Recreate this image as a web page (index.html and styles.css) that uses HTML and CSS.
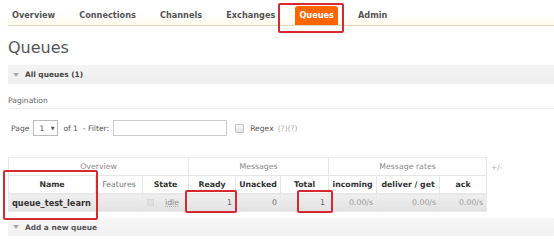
FILE: index.html
```html
<!DOCTYPE html>
<html lang="en">

<head>
    <meta charset="UTF-8">
    <title>Queues</title>
    <link rel="stylesheet" href="styles.css">
</head>

<body>
    <div class="page">
        <ul class="nav">
            <li><a href="#">Overview</a></li>
            <li><a href="#">Connections</a></li>
            <li><a href="#">Channels</a></li>
            <li><a href="#">Exchanges</a></li>
            <li><a href="#" class="active">Queues</a></li>
            <li><a href="#">Admin</a></li>
        </ul>

        <h1>Queues</h1>

        <div class="section-bar">
            <svg class="toggle" width="6" height="4" viewBox="0 0 6 4"><polygon points="0,0 6,0 3,4" fill="#aaa"/></svg>
            <span>All queues (1)</span>
        </div>

        <div class="pagination-title">Pagination</div>

        <div class="filter-row">
            <span>Page</span>
            <span class="page-select">1 <span class="arrow">&#9660;</span></span>
            <span>of 1 &nbsp;- Filter:</span>
            <span class="filter-input"></span>
            <span class="checkbox"></span>
            <span>Regex</span>
            <span class="help">(?)(?)</span>
        </div>

        <div class="table-wrap">
            <table class="queues">
                <colgroup>
                    <col style="width: 87px">
                    <col style="width: 47px">
                    <col style="width: 46px">
                    <col style="width: 47px">
                    <col style="width: 45px">
                    <col style="width: 48px">
                    <col style="width: 48px">
                    <col style="width: 63px">
                    <col style="width: 47px">
                </colgroup>
                <thead>
                    <tr class="group">
                        <th colspan="3">Overview</th>
                        <th colspan="3">Messages</th>
                        <th colspan="3">Message rates</th>
                    </tr>
                    <tr class="cols">
                        <th>Name</th>
                        <th class="light">Features</th>
                        <th>State</th>
                        <th>Ready</th>
                        <th>Unacked</th>
                        <th>Total</th>
                        <th>incoming</th>
                        <th>deliver / get</th>
                        <th>ack</th>
                    </tr>
                </thead>
                <tbody>
                    <tr>
                        <td class="name">queue_test_learn</td>
                        <td></td>
                        <td class="state"><span class="dot"></span><abbr>idle</abbr></td>
                        <td class="num">1</td>
                        <td class="num">0</td>
                        <td class="num">1</td>
                        <td class="num rate">0.00/s</td>
                        <td class="num rate">0.00/s</td>
                        <td class="num rate">0.00/s</td>
                    </tr>
                </tbody>
            </table>
            <span class="plus-minus">+/-</span>
        </div>

        <div class="section-bar add">
            <svg class="toggle" width="6" height="4" viewBox="0 0 6 4"><polygon points="0,0 6,0 3,4" fill="#aaa"/></svg>
            <span>Add a new queue</span>
        </div>

        <!-- 注釈の赤枠 -->
        <div class="mark mark-nav"></div>
        <div class="mark mark-name"></div>
        <div class="mark mark-ready"></div>
        <div class="mark mark-total"></div>
    </div>
</body>

</html>
```

FILE: styles.css
```css
body {
    margin: 0;
    padding: 0;
    background-color: white;
    font-family: "DejaVu Sans", Verdana, sans-serif;
    color: #484848;
}

.page {
    position: relative;
    padding-left: 8px;
    overflow: hidden;
    height: 244px;
}

.nav {
    display: flex;
    gap: 16px;
    list-style: none;
    margin: 0;
    padding: 0;
    height: 25px;
    align-items: flex-end;
    border-bottom: 1px solid #e4d8b8;
    background: linear-gradient(white 60%, #fffaea);
}

.nav a {
    display: block;
    padding: 0 4px;
    height: 19px;
    line-height: 19px;
    font-size: 8.2px;
    font-weight: bold;
    color: #555;
    text-decoration: none;
    border-radius: 3px 3px 0 0;
}

.nav a.active {
    background-color: #f60;
    color: white;
}

h1 {
    margin: 12px 0 0 0;
    height: 20px;
    line-height: 20px;
    font-size: 16px;
    font-weight: normal;
    color: #555;
}

.section-bar {
    display: flex;
    align-items: center;
    margin-top: 7px;
    height: 19px;
    padding-left: 5px;
    background: linear-gradient(#f4f4f4, #efefef);
    font-size: 7.4px;
    font-weight: bold;
    color: #444;
}

.section-bar .toggle {
    margin-right: 6px;
}

.pagination-title {
    margin-top: 10px;
    height: 14px;
    line-height: 14px;
    font-size: 7.6px;
    color: #666;
    border-bottom: 1px solid #eee;
}

.filter-row {
    display: flex;
    align-items: center;
    margin-top: 11px;
    height: 16px;
    padding-left: 3px;
    font-size: 7.6px;
    color: #555;
}

.page-select {
    display: inline-block;
    box-sizing: border-box;
    width: 25px;
    height: 16px;
    line-height: 14px;
    margin: 0 5px 0 4px;
    padding-left: 5px;
    border: 1px solid #bbb;
    background: white;
}

.page-select .arrow {
    font-size: 5px;
    margin-left: 4px;
    vertical-align: 1px;
}

.filter-input {
    display: inline-block;
    box-sizing: border-box;
    width: 114px;
    height: 16px;
    margin-left: 4px;
    border: 1px solid #ccc;
    background: white;
}

.checkbox {
    display: inline-block;
    box-sizing: border-box;
    width: 9px;
    height: 9px;
    margin: 0 6px 0 8px;
    border: 1px solid #c4c4c4;
    border-radius: 1px;
    background: linear-gradient(#f8f8f8, #e4e4e4);
}

.help {
    margin-left: 4px;
    color: #aaa;
}

.table-wrap {
    display: flex;
    align-items: flex-start;
    margin-top: 21px;
}

.queues {
    border-collapse: collapse;
    table-layout: fixed;
    width: 478px;
    font-size: 7.8px;
}

.queues th,
.queues td {
    height: 18px;
    padding: 0 3px;
    border: 1px solid #e6e6e6;
    box-sizing: border-box;
    white-space: nowrap;
    overflow: hidden;
}

.queues .group th {
    font-weight: normal;
    color: #888;
    border-top-color: #eee;
}

.queues .cols th {
    font-weight: bold;
    color: #333;
}

.queues .cols th.light {
    font-weight: normal;
    color: #777;
}

.queues tbody td {
    background: linear-gradient(#efefef, #e2e2e2);
    border-color: #e8e8e8;
    color: #666;
}

.queues td.name {
    font-weight: bold;
    font-size: 8.2px;
    color: #333;
    padding-left: 3px;
}

.queues td.num {
    text-align: right;
}

.queues td.rate {
    color: #999;
}

.queues td.state {
    padding-left: 4px;
}

.queues .dot {
    display: inline-block;
    width: 5px;
    height: 5px;
    margin-right: 11px;
    background: #e0e0e0;
    border: 1px solid #d8d8d8;
    vertical-align: middle;
}

.queues abbr {
    text-decoration: underline dotted #aaa;
    color: #888;
}

.plus-minus {
    margin: 6px 0 0 4px;
    font-size: 7.4px;
    color: #aaa;
}

.section-bar.add {
    margin-top: 6px;
    height: 18px;
    background: linear-gradient(#f6f6f6, #f2f2f2);
    color: #555;
}

.mark {
    position: absolute;
    border: 2px solid #d42a30;
    border-radius: 2px;
    box-sizing: border-box;
}

.mark-nav {
    left: 278px;
    top: 3px;
    width: 66px;
    height: 30px;
}

.mark-name {
    left: 3px;
    top: 170px;
    width: 95px;
    height: 50px;
}

.mark-ready {
    left: 185px;
    top: 190px;
    width: 52px;
    height: 23px;
}

.mark-total {
    left: 297px;
    top: 190px;
    width: 36px;
    height: 23px;
}
```
